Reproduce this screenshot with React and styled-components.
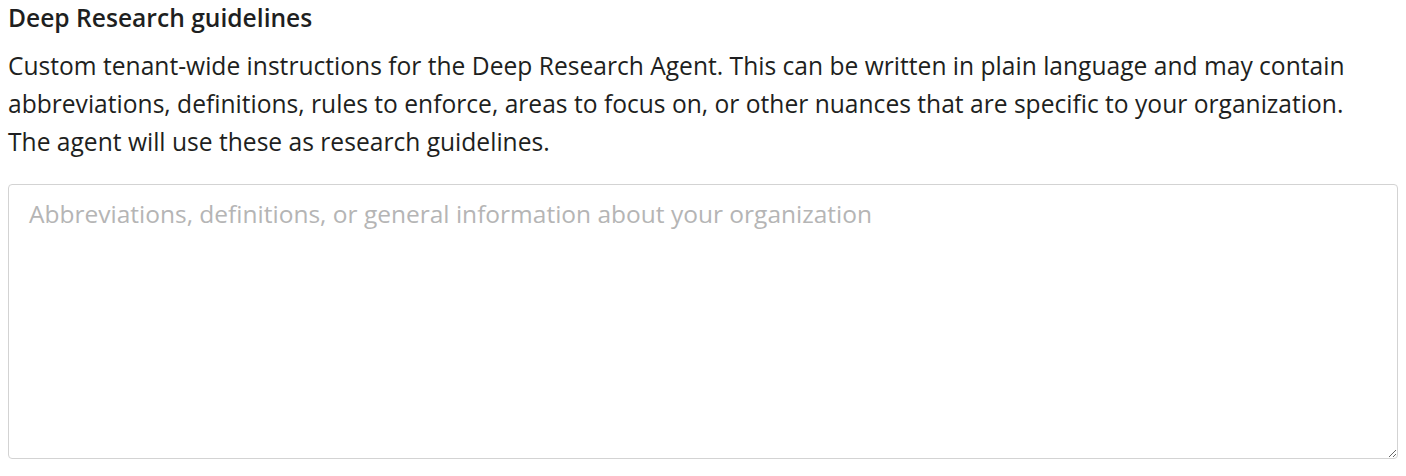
import React from "react";
import styled, { createGlobalStyle } from "styled-components";

const Global = createGlobalStyle`
  html, body { margin: 0; padding: 0; background: #ffffff; }
  body { font-family: "Open Sans", Lato, sans-serif; color: #1e1f21; }
`;

const Section = styled.section`
  display: flex;
  flex-direction: column;
  padding: 3px 8px 0 8px;
`;

const Title = styled.h3`
  margin: 0;
  font-size: 24.6px;
  line-height: 30px;
  font-weight: 600;
  color: #1e1f21;
`;

const Description = styled.p`
  margin: 14px 0 0 0;
  font-size: 24.6px;
  line-height: 38px;
  font-weight: 400;
  color: #1e1f21;
`;

const Field = styled.textarea`
  margin-top: 23px;
  box-sizing: border-box;
  width: 100%;
  height: 275px;
  border: 1px solid #d3d3d3;
  border-radius: 4px;
  padding: 14px 20px;
  font-family: inherit;
  font-size: 24.5px;
  line-height: 30px;
  color: #1e1f21;
  resize: vertical;
  outline: none;
  &::placeholder { color: #b5b5b5; }
`;

export default function App() {
  return (
    <>
      <Global />
      <Section>
        <Title>Deep Research guidelines</Title>
        <Description>
          Custom tenant-wide instructions for the Deep Research Agent. This can be written in plain language and may contain abbreviations, definitions, rules to enforce, areas to focus on, or other nuances that are specific to your organization.
          <br />
          The agent will use these as research guidelines.
        </Description>
        <Field placeholder="Abbreviations, definitions, or general information about your organization" />
      </Section>
    </>
  );
}
